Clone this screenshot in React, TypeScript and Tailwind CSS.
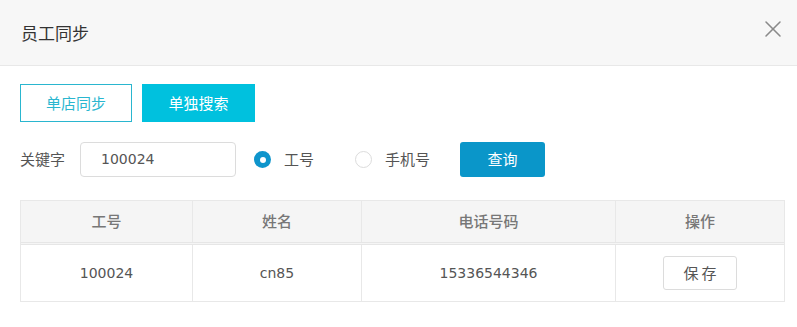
import { X } from 'lucide-react';

const font = { fontFamily: '"Microsoft YaHei", "Noto Sans CJK SC", sans-serif' };
const digits = { fontFamily: '"DejaVu Sans", "Noto Sans CJK SC", sans-serif' };

export default function App() {
  return (
    <div className="w-[797px] h-[327px] bg-white overflow-hidden" style={font}>
      {/* Header */}
      <div className="h-[66px] bg-[#f7f7f7] border-b border-[#e8e8e8] flex items-center justify-between pl-[21px] pr-[10px]">
        <span className="text-[17px] text-[#333]">员工同步</span>
        <X className="w-[28px] h-[28px] text-[#8a8a8a] mb-[8px]" strokeWidth={1.3} />
      </div>

      <div className="px-[20px] pt-[18px]">
        {/* Tabs */}
        <div className="flex gap-[10px]">
          <button className="w-[112px] h-[38px] border border-[#2ab6cf] text-[#2ab6cf] text-[15px]">单店同步</button>
          <button className="w-[113px] h-[38px] bg-[#00c1de] text-white text-[15px]">单独搜索</button>
        </div>

        {/* Search row */}
        <div className="flex items-center mt-[20px] h-[35px]">
          <span className="text-[15px] text-[#555] w-[60px]">关键字</span>
          <div className="w-[156px] h-[35px] border border-[#dcdcdc] rounded-[4px] flex items-center pl-[20px] text-[14px] text-[#555]" style={digits}>100024</div>
          <div className="flex items-center ml-[18px]">
            <span className="w-[17px] h-[17px] rounded-full bg-[#0e95cc] flex items-center justify-center">
              <span className="w-[6px] h-[6px] rounded-full bg-white" />
            </span>
            <span className="ml-[13px] text-[15px] text-[#555]">工号</span>
          </div>
          <div className="flex items-center ml-[41px]">
            <span className="w-[17px] h-[17px] rounded-full border border-[#dcdcdc]" />
            <span className="ml-[13px] text-[15px] text-[#555]">手机号</span>
          </div>
          <button className="ml-[30px] w-[85px] h-[35px] rounded-[3px] bg-[#0a96c9] text-white text-[15px]">查询</button>
        </div>

        {/* Table */}
        <div className="mt-[23px] w-[765px] border border-[#e8e8e8]">
          <div className="grid grid-cols-[172px_169px_254px_1fr] h-[44px] bg-[#f5f5f5] border-b-[3px] border-double border-[#e6e6e6] text-[#777] text-[15px]">
            <div className="flex items-center justify-center border-r border-[#e8e8e8] font-medium">工号</div>
            <div className="flex items-center justify-center border-r border-[#e8e8e8] font-medium">姓名</div>
            <div className="flex items-center justify-center border-r border-[#e8e8e8] font-medium">电话号码</div>
            <div className="flex items-center justify-center font-medium">操作</div>
          </div>
          <div className="grid grid-cols-[172px_169px_254px_1fr] h-[56px] text-[#555] text-[14px]">
            <div className="flex items-center justify-center border-r border-[#e8e8e8]" style={digits}>100024</div>
            <div className="flex items-center justify-center border-r border-[#e8e8e8]" style={digits}>cn85</div>
            <div className="flex items-center justify-center border-r border-[#e8e8e8]" style={digits}>15336544346</div>
            <div className="flex items-center justify-center">
              <button className="w-[74px] h-[34px] border border-[#dcdcdc] rounded-[3px] text-[#555] text-[15px] tracking-[3px] pl-[3px]">保存</button>
            </div>
          </div>
        </div>
      </div>
    </div>
  );
}
